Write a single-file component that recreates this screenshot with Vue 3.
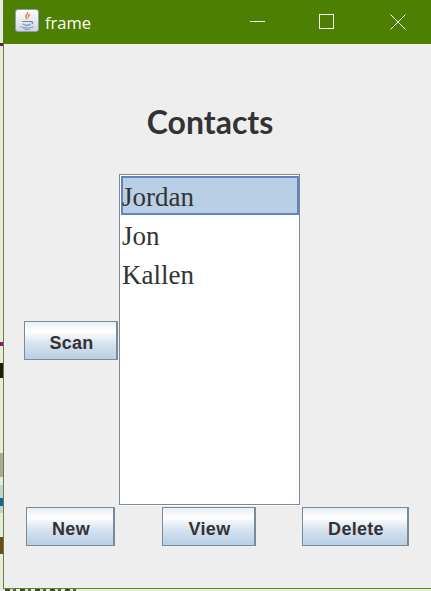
<script setup>
const contacts = ['Jordan', 'Jon', 'Kallen']
const actions = [
  { label: 'New', cls: 'new' },
  { label: 'View', cls: 'view' },
  { label: 'Delete', cls: 'del' },
]
const leftBits = ['b1', 'b2', 'b3', 'b4', 'b5', 'b6', 'b7']
</script>

<template>
  <div class="screen">
    <div class="window">
      <header class="titlebar">
        <span class="app-icon">
          <svg width="24" height="23" viewBox="0 0 24 23">
            <defs>
              <linearGradient id="iconbg" x1="0" y1="0" x2="0" y2="1">
                <stop offset="0" stop-color="#ffffff" />
                <stop offset="1" stop-color="#c9d6e6" />
              </linearGradient>
            </defs>
            <rect x="0.5" y="0.5" width="23" height="22" rx="2.5" fill="url(#iconbg)" stroke="#8c9db3" />
            <path d="M12.5 3c1.2 1.8-2.6 3-1.6 5.2.4.9 1 1.2 1.2 2M15 5.2c-1.6 1-2.2 2-1.2 3.2" stroke="#e8863a" stroke-width="1.5" fill="none" />
            <path d="M7 12.5h9.500M8 14.800c1 2 6 2 7.500 0M15.500 13c2-.6 3 .6 1.400 1.800" stroke="#74889f" stroke-width="1.200" fill="none" />
            <path d="M5.500 17.500c3 1.800 10 1.800 13 0M8.500 20c2 .6 5 .6 7 0" stroke="#8da0b6" stroke-width="1.100" fill="none" />
          </svg>
        </span>
        <span class="caption">frame</span>
        <svg class="controls" width="156" height="16" viewBox="0 0 156 16">
          <path d="M0 7.500h15" stroke="#fff" fill="none" />
          <rect x="69.500" y="0.500" width="14" height="14" stroke="#fff" fill="none" />
          <path d="M140.500 0.500l15 15M155.500 0.500l-15 15" stroke="#fff" fill="none" />
        </svg>
      </header>
      <main class="body">
        <h1 class="heading">Contacts</h1>
        <section class="middle">
          <button class="btn scan"><span>Scan</span></button>
          <ul class="list">
            <li v-for="(c, i) in contacts" :key="c" :class="['item', { selected: i === 0 }]">{{ c }}</li>
          </ul>
        </section>
        <footer class="actions">
          <button v-for="a in actions" :key="a.label" :class="['btn', a.cls]"><span>{{ a.label }}</span></button>
        </footer>
      </main>
    </div>
    <span v-for="b in leftBits" :key="b" :class="['bit', b]"></span>
    <span class="bottom-bits"></span>
  </div>
</template>

<style>
html, body { margin: 0; padding: 0; background: #d8d8d8; }
</style>

<style scoped>
.screen {
  position: relative;
  width: 431px;
  height: 591px;
  overflow: hidden;
  background: #e8e8e8;
  padding-left: 3px;
  box-sizing: border-box;
}
.window {
  width: 428px;
  height: 589px;
  box-sizing: border-box;
  border-left: 1px solid #5f8a1c;
  border-bottom: 1px solid #5a9200;
  background: #eeeeee;
  display: flex;
  flex-direction: column;
}
.titlebar {
  height: 44px;
  margin-left: -1px;
  background: #4c7f02;
  display: flex;
  align-items: center;
  color: #fff;
  flex: none;
}
.app-icon { display: flex; margin-left: 12px; margin-top: -3px; }
.caption {
  margin-left: 6px;
  font: 16.500px "Open Sans", sans-serif;
}
.controls { margin-left: auto; margin-right: 25px; }
.body { flex: 1; display: flex; flex-direction: column; }
.heading {
  margin: 56px 0 0;
  height: 44px;
  text-align: center;
  font: bold 32px/44px "Lato", sans-serif;
  color: #333;
  padding-right: 15px;
}
.middle {
  margin-top: 30px;
  padding-left: 20px;
  display: flex;
  align-items: center;
}
.btn {
  box-sizing: border-box;
  height: 39px;
  padding: 6px 0 0 2px;
  border: 1px solid #7a8a99;
  border-right-width: 2px;
  font: bold 18px "Liberation Sans", sans-serif;
  letter-spacing: 0.3px;
  color: #333;
  background: linear-gradient(#e6eef6 0%, #ffffff 25%, #d5e2ef 60%, #b8cfe5 100%);
}
.scan { width: 94px; margin: 1px 1px 0 0; }
.list {
  list-style: none;
  margin: 0;
  padding: 1px 0 0 1px;
  box-sizing: border-box;
  width: 181px;
  height: 331px;
  background: #fff;
  border: 1px solid #7a8a99;
  box-shadow: 0 1px 0 #fff;
}
.item {
  box-sizing: border-box;
  height: 39px;
  padding-left: 1px;
  font: 27px/43px "Liberation Serif", serif;
  color: #333;
}
.selected {
  background: #b8cfe5;
  border: 2px solid #6382bf;
  padding-left: 0;
  text-indent: -1px;
  line-height: 39px;
}
.actions {
  margin-top: 2px;
  padding-left: 22px;
  display: flex;
}
.new { width: 89px; }
.view { width: 94px; margin-left: 47px; }
.del { width: 107px; margin-left: 46px; }
.bit { position: absolute; left: 0; width: 3px; }
.b1 { top: 43px; height: 3px; background: #6d1460; }
.b2 { top: 342px; height: 4px; background: #8a1a70; }
.b3 { top: 363px; height: 15px; background: #1c1c1c; }
.b4 { top: 453px; height: 24px; background: #a8a8a8; }
.b5 { top: 485px; height: 28px; background: #c3d0dc; }
.b6 { top: 498px; height: 8px; background: #1a5fa8; }
.b7 { top: 537px; height: 17px; background: #6b4a2c; }
.bottom-bits {
  position: absolute;
  left: 5px;
  bottom: 0;
  width: 72px;
  height: 2px;
  background: repeating-linear-gradient(90deg, #444 0 5px, #ddd 5px 8px, #555 8px 11px, #eee 11px 15px);
}
</style>
